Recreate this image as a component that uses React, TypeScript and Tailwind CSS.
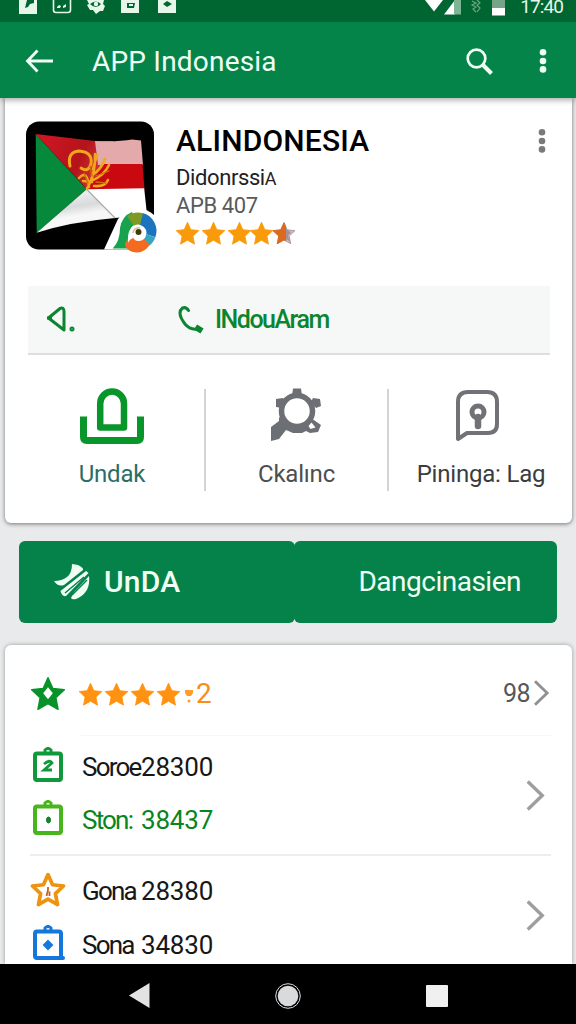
import type { ReactNode } from "react"
import clsx from "clsx"

const STAR = "M12 1.2l3.2 7.1 7.7.9-5.7 5.3 1.5 7.7L12 18.4l-6.7 3.8 1.5-7.7-5.7-5.3 7.7-.9z"

function Star({ className }: { className?: string }) {
  return (
    <svg className={className} viewBox="0 0 24 24" fill="currentColor">
      <path d={STAR} stroke="currentColor" strokeWidth=".8" strokeLinejoin="round" />
    </svg>
  )
}

function HalfStar() {
  return (
    <svg className="-ml-[2px] h-[25px] w-[24px]" viewBox="0 0 24 24">
      <defs>
        <clipPath id="half">
          <path d="M0 0h14v24H0z" />
        </clipPath>
      </defs>
      <path d={STAR} fill="#c9bdc0" stroke="#a08d91" strokeWidth=".8" />
      <path d="M13 7v10l5 3-2-6 3-3z" fill="#8b7479" opacity=".6" />
      <path d={STAR} fill="#dc6a1c" stroke="#dc6a1c" strokeWidth=".8" clipPath="url(#half)" />
    </svg>
  )
}

function MoreDots({ className }: { className?: string }) {
  return (
    <svg className={clsx("h-7 w-2", className)} viewBox="0 0 8 28" fill="currentColor">
      <circle cx="4" cy="5.3" r="3.3" />
      <circle cx="4" cy="14" r="3.3" />
      <circle cx="4" cy="22.4" r="3.3" />
    </svg>
  )
}

function Chevron({ className }: { className?: string }) {
  return (
    <svg className={className} viewBox="0 0 18 30" fill="none" stroke="currentColor" strokeWidth="3.3">
      <path d="M1.5 1.5L15.5 15l-14 13.500" />
    </svg>
  )
}

function StatusBar() {
  return (
    <div className="flex h-[22px] justify-between overflow-hidden bg-[#006631] text-[#e6f7ea]">
      <svg className="h-[22px] w-[190px]" viewBox="0 0 190 22">
        <path d="M19 0h18v14H19z" fill="currentColor" />
        <path d="M27 0h7v3l-4 1-2 3-3 1z" fill="#006631" />
        <path d="M53.500 0v10q0 2.500 2.500 2.500h12q2.500 0 2.500-2.500V0" fill="none" stroke="currentColor" strokeWidth="1.600" />
        <path d="M57 7l2-2 2 1-1 2h-3zM63 6l3-2v3l-3 1z" fill="currentColor" />
        <path d="M87 0l2 4-2 1 3 5h3l3 4 4-3h3l2-5-2-2 1-4z" fill="currentColor" />
        <path d="M90 4q6-5 11 0-5 6-11 0z" fill="#006631" />
        <circle cx="96" cy="4" r="2.200" fill="currentColor" />
        <path d="M121 0h18v13h-18z" fill="currentColor" />
        <path d="M127 3h8l-1 5h-7z" fill="#006631" />
        <path d="M129 4h4v2h-4z" fill="currentColor" />
        <path d="M158 0h18v13h-18z" fill="currentColor" />
        <path d="M163 4l4-3 5 3-5 3z" fill="#006631" />
      </svg>
      <div className="flex items-start">
        <svg className="h-[22px] w-[95px]" viewBox="0 0 95 22">
          <path d="M0 0h18L9 11.500z" fill="#fff" />
          <path d="M30 0v14.500H19z" fill="#fff" />
          <path d="M29 0h7v14.500h-7z" fill="#7db493" />
          <path d="M47 1l4 2-4 2 4 2-3 2 3 3M52 0l3 3-3 2 3 3-3 4" fill="none" stroke="#6ba584" strokeWidth="1.200" />
          <path d="M67 0h13v8H67z" fill="#74a588" />
          <path d="M67 8h13v7.500H67z" fill="#fff" />
        </svg>
        <span className="mr-[13px] text-[19px] leading-[14px] tracking-[-0.9px]">17:40</span>
      </div>
    </div>
  )
}

function AppIcon() {
  return (
    <svg className="h-[132px] w-[132px] shrink-0 overflow-visible" viewBox="0 0 132 132">
      <defs>
        <linearGradient id="fold" x1="0" y1="0" x2="1" y2=".3">
          <stop offset="0" stopColor="#d31624" />
          <stop offset=".65" stopColor="#b3141b" />
          <stop offset="1" stopColor="#d93a3b" />
        </linearGradient>
        <linearGradient id="paper" x1="0" y1="0" x2=".3" y2="1">
          <stop offset="0" stopColor="#fff" />
          <stop offset=".5" stopColor="#d8dadb" />
          <stop offset=".7" stopColor="#f7f7f7" />
        </linearGradient>
      </defs>
      <rect width="128" height="128" rx="13" y=".5" fill="#000" />
      <path d="M9.700 13L60.700 68.300 10.700 111.700z" fill="#06893a" />
      <path d="M9.700 13L69 20l18 0-8 48H60.700z" fill="url(#fold)" />
      <path d="M69 20q23 1 37-1.500l9 1L117 44H72z" fill="#e3a9ab" />
      <path d="M78 43h38.500l2 25H60.700z" fill="#c9080f" />
      <path d="M60.700 68.300l57.500-1L121 94l-32 3z" fill="#fff" />
      <path d="M60.700 68.300L89 97q-45 4-78.300 14.700z" fill="url(#paper)" />
      <path d="M60.700 68.300L89 97" stroke="#aaa" strokeWidth="1.200" />
      <g fill="none" stroke="#f3a51c" strokeLinecap="round">
        <path d="M44 45Q41 31 53 30q14 1 12 13-3 9-10 4" strokeWidth="3" />
        <path d="M61 68q9-16 8-35M53 57q8-9 10 9M65 60q13-5 18-16M66 54q9-5 13-16M68 65q11 1 14-6M67 48l4-14M57 60l9 1" strokeWidth="2.600" />
        <path d="M58 52l4 10M64 45l2 10M70 55l13-5M70 61l10 1" stroke="#c66f0c" strokeWidth="1.300" />
      </g>
      <path d="M78 128.500L92 98q8-10 20-10 10 0 16 6v34.500z" fill="#fff" />
      <path d="M86.700 127.500Q94 120 94 107q2-12 12-16l5 11q-7 3-7 10l-2 15.500z" fill="#17a34d" />
      <g fill="none" strokeWidth="12">
        <path d="M118.200 120.800A12.500 12.500 0 0 0 123.700 114.300" stroke="#35a5c4" />
        <path d="M115 97.900a12.500 12.500 0 0 1 8.700 16.400" stroke="#1b74bd" />
        <path d="M104.500 100q5-3.500 11-2" stroke="#7d9a25" />
        <path d="M119.500 119.800q-7 6-14 1.500" stroke="#f36b20" />
      </g>
      <path d="M99 124q1-8 9-7l10 2 6 4q-5 9-14 8.500-9-1-11-7.500z" fill="#f36b20" />
      <path d="M102 122q-1-17 9-18 9 0 9.500 8-1 8-8 8-4 0-5-3-4 1-5.500 5z" fill="#fff" />
      <circle cx="112.500" cy="111" r="3" fill="#3d3d12" />
      <path d="M107 112q1-6 7-5" fill="none" stroke="#d9b77d" strokeWidth="1.400" />
    </svg>
  )
}

function AppHeader() {
  return (
    <div className="flex pl-[21px] pt-[23px]">
      <AppIcon />
      <div className="ml-[18px] flex flex-1 flex-col">
        <h1 className="h-[43px] pt-[2px] text-[30px] font-medium leading-[36px] tracking-[0.2px] text-black">ALINDONESIA</h1>
        <p className="h-[27px] text-[22px] leading-[28px] tracking-[-0.4px] text-[#222]">
          Didonrssi<span className="text-[18px]">A</span>
        </p>
        <p className="h-[27px] text-[22px] leading-[29px] tracking-[-0.4px] text-[#5a5a5c]">APB 407</p>
        <div className="-ml-px mt-[3px] flex text-[#f99a0b]">
          <Star className="h-[25px] w-[25px]" />
          <Star className="ml-px h-[25px] w-[25px]" />
          <Star className="ml-px h-[25px] w-[25px]" />
          <Star className="-ml-[3px] h-[25px] w-[25px]" />
          <HalfStar />
        </div>
      </div>
      <MoreDots className="mr-[26px] mt-[6px] text-[#77797b]" />
    </div>
  )
}

function ContactStrip() {
  return (
    <div className="ml-[23px] mr-[22px] mt-[33px] flex h-[69px] items-center border-b-2 border-[#dddedf] bg-[#f6f7f7] text-[#0b852f]">
      <svg className="ml-[18px] h-8 w-8" viewBox="0 0 32 32" fill="none" stroke="currentColor" strokeWidth="3" strokeLinejoin="round">
        <path d="M2.500 14L14 4.500q4-1.500 4 3V26L2.500 14z" />
        <path d="M1 14h5" />
        <circle cx="26" cy="25" r="1" />
      </svg>
      <svg className="ml-[99px] h-8 w-8" viewBox="0 0 32 32" fill="none" stroke="currentColor" strokeLinecap="round">
        <path d="M11.500 6.500Q9 2.500 5.500 4 -.5 9 8 20q5 6 12 5" strokeWidth="3" />
        <path d="M18.500 23l6.500 4" strokeWidth="6" strokeLinecap="butt" />
      </svg>
      <span className="ml-[6px] text-[25px] font-medium leading-8 tracking-[-1.5px]">INdouAram</span>
    </div>
  )
}

function Action({ label, className, iconClassName, children }: { label: string; className?: string; iconClassName?: string; children: ReactNode }) {
  return (
    <div className={clsx("flex shrink-0 flex-col items-center", className)}>
      <svg className={clsx("-mt-[2px] h-16 w-16 shrink-0 overflow-visible", iconClassName)} viewBox="0 0 64 64">
        {children}
      </svg>
      <span className="mt-[7px] whitespace-nowrap text-[24px] leading-[32px] tracking-[-0.2px]">{label}</span>
    </div>
  )
}

function ActionRow() {
  return (
    <div className="mt-[34px] flex h-[103px] pl-[23px]">
      <Action label="Undak" className="w-[168px] text-[#2b6d66]">
        <path d="M20.200 40.500V16.500a11.900 11.900 0 0 1 23.800 0v24z" fill="none" stroke="#08952a" strokeWidth="6.500" strokeLinejoin="round" />
        <path d="M3.500 29.500V50q0 3.500 3.500 3.500h50q3.500 0 3.500-3.500V29.500" fill="none" stroke="#08952a" strokeWidth="7" />
      </Action>
      <div className="ml-[8px] h-[102px] w-[2px] shrink-0 bg-[#d3d4d5]" />
      <Action label="Ckalınc" className="w-[181px] text-[#4c4e50]">
        <g fill="#6c6f73">
          <circle cx="32" cy="24" r="15.500" fill="none" stroke="#6c6f73" strokeWidth="5.500" />
          <path d="M28 1.500h8l1 7h-10zM11 12l7-1 3 4-4 6-6-1zM46 15l2-4 7 1 1 7-5 2zM46 31l10 7-3 7-8 1-8-4z" />
          <path d="M14 30l7 5 7 5 10 0 5 3-6 3-9 0-7-3-7 9-8 2V40l8-6z" />
          <path d="M46.500 35.500l4 5-5 1.500-2-3z" fill="#fff" />
        </g>
      </Action>
      <div className="h-[102px] w-[2px] shrink-0 bg-[#d3d4d5]" />
      <Action label="Pininga: Lag" className="ml-[2px] w-[180px] text-[#3a3d40]" iconClassName="-ml-[8px]">
        <g fill="none" stroke="#707276" strokeWidth="4" strokeLinejoin="round">
          <path d="M13 52V15Q13 5 23 5h19Q52 5 52 15v22Q52 46 43 46H22z" />
          <circle cx="33" cy="25" r="6" strokeWidth="5" />
          <path d="M33 30v9" strokeWidth="6.500" strokeLinecap="round" />
        </g>
      </Action>
    </div>
  )
}

function Buttons() {
  return (
    <div className="ml-[19px] mt-[18px] flex h-[82px] w-[538px] text-[#effff4]">
      <button className="flex w-[276px] items-center rounded-[6px] bg-[#058249] pl-[35px]">
        <svg className="h-9 w-9" viewBox="0 0 36 36" fill="currentColor">
          <path d="M0 17q8 0 13-4 5-4 5-13l6 1q6 3 5 5L10 21Q4 23 0 17z" />
          <path d="M6.500 27L32 7l2.500 2L12 32q-4 1-5.500-5z" />
          <path d="M17 34l3-6L35 12q2 17-13 23-4 1-5-1z" />
          <path d="M11 29l19-16M18 31l15-15" stroke="#058249" strokeWidth="1.500" />
        </svg>
        <span className="ml-[14px] text-[30px] font-medium leading-9 tracking-[0.2px]">UnDA</span>
      </button>
      <button className="-ml-px flex w-[263px] items-center justify-end rounded-[6px] bg-[#058249] pr-[36px]">
        <span className="text-[28px] leading-9 tracking-[-0.5px]">Dangcinasien</span>
      </button>
    </div>
  )
}

function Clipboard({ className, children }: { className: string; children: ReactNode }) {
  return (
    <svg className={clsx("h-10 w-9 shrink-0", className)} viewBox="0 0 36 40" stroke="currentColor" fill="none">
      <rect x="5" y="6.500" width="26" height="26.500" rx="2" strokeWidth="4" />
      <path d="M15 6V3q3-3 6 0v3" strokeWidth="3" />
      {children}
    </svg>
  )
}

function Entry({ icon, name, value, className }: { icon: ReactNode; name: string; value: string; className?: string }) {
  return (
    <div className={clsx("flex items-center text-[26px] leading-8", className)}>
      {icon}
      <span className="ml-[16px] w-[59px] whitespace-nowrap tracking-[-1.8px]">{name}</span>
      <span className="tracking-[-0.2px]">{value}</span>
    </div>
  )
}

function StatsCard() {
  return (
    <div className="ml-[5px] mt-[22px] h-[319px] w-[567px] overflow-hidden rounded-t-[6px] bg-white pl-[25px] pr-[21px] shadow-[0_0_4px_rgba(0,0,0,0.35)]">
      <div className="flex h-[90px] items-center pt-[8px]">
        <svg className="h-9 w-9" viewBox="0 0 24 24">
          <path d={STAR} fill="#079329" stroke="#079329" strokeLinejoin="round" />
          <path d="M12 7.500l3.200 4-3.200 4-3.200-4z" fill="#fff" />
        </svg>
        <div className="ml-[12px] flex gap-px text-[#ff9210]">
          {[0, 1, 2, 3].map((i) => (
            <Star key={i} className="h-[25px] w-[25px]" />
          ))}
        </div>
        <svg className="ml-[3px] h-6 w-[10px]" viewBox="0 0 10 24" fill="#ff9d28">
          <path d="M1 8h8v3l-2 3H3l-2-3z" />
          <circle cx="5" cy="19" r="1.500" />
        </svg>
        <span className="ml-[2px] text-[28px] leading-8 text-[#f68e18]">2</span>
        <span className="ml-auto text-[25px] leading-8 tracking-[-0.6px] text-[#55585a]">98</span>
        <Chevron className="mr-px ml-[3px] h-[26px] w-[17px] -translate-y-px text-[#8f9192]" />
      </div>
      <div className="ml-auto h-px w-[470px] bg-[#f7f8f8]" />
      <div className="flex h-[120px] items-center justify-between border-b-2 border-[#edeeee]">
        <div className="mb-[3px]">
          <Entry
            name="Soroe"
            value="28300"
            className="h-[53px] text-[#171717]"
            icon={
              <Clipboard className="text-[#10983a]">
                <path d="M14 17q6-5 8-1l-8 7h8" strokeWidth="2.800" />
              </Clipboard>
            }
          />
          <Entry
            name="Ston:"
            value="38437"
            className="h-[53px] text-[#07851e]"
            icon={
              <Clipboard className="text-[#48b51c]">
                <ellipse cx="18.500" cy="20" rx="2" ry="3" fill="#16822c" stroke="#16822c" />
              </Clipboard>
            }
          />
        </div>
        <Chevron className="mr-[6px] h-[31px] w-[19px] text-[#9d9f9f]" />
      </div>
      <div className="flex h-[118px] items-center justify-between">
        <div className="mt-[6px]">
          <Entry
            name="Gona"
            value="28380"
            className="h-[54px] text-[#171717]"
            icon={
              <svg className="mb-[3px] h-9 w-9 shrink-0" viewBox="0 0 24 24">
                <path d={STAR} fill="none" stroke="#ed930f" strokeWidth="2.600" strokeLinejoin="round" transform="translate(.6 .6) scale(.95)" />
                <path d="M12 10v2l-1 4m2-3v3" fill="none" stroke="#c65f2a" strokeWidth="1.200" />
              </svg>
            }
          />
          <Entry
            name="Sona"
            value="34830"
            className="h-[54px] text-[#171717]"
            icon={
              <Clipboard className="text-[#1477dc]">
                <path d="M18 16l4 4-4 4-4-4z" fill="currentColor" strokeWidth="2" />
                <path d="M29 33h4" strokeWidth="4" strokeLinecap="round" />
              </Clipboard>
            }
          />
        </div>
        <Chevron className="mr-[6px] h-[31px] w-[19px] text-[#9d9f9f]" />
      </div>
    </div>
  )
}

function NavBar() {
  return (
    <div className="relative flex h-[60px] items-center bg-black pt-[4px]">
      <svg className="ml-[129px] h-[26px] w-[21px]" viewBox="0 0 21 26" fill="#e2e2e2">
        <path d="M0 12.500L20.500 0v25z" />
      </svg>
      <svg className="ml-[125px] h-[26px] w-[26px]" viewBox="0 0 26 26">
        <circle cx="13" cy="13" r="12.300" fill="none" stroke="#ddd" />
        <circle cx="13" cy="13" r="10.300" fill="#d9dadb" />
      </svg>
      <div className="ml-[125px] h-[22px] w-[22px] rounded-[1px] bg-[#f0f0f0]" />
    </div>
  )
}

export default function App() {
  return (
    <div className="h-[1024px] w-[576px] overflow-hidden bg-[#e9eaeb] font-['Roboto',sans-serif]">
      <div className="relative z-10 shadow-[0_2px_6px_rgba(0,0,0,0.35)]">
        <StatusBar />
        <div className="flex h-[76px] items-center bg-[#058449] pt-[2px] text-[#f0fff5]">
          <svg className="ml-[25px] h-6 w-7" viewBox="0 0 28 24" fill="none" stroke="currentColor" strokeWidth="2.800">
            <path d="M12.500 1.500L2.500 12l10 10.500M2.500 12H28" />
          </svg>
          <span className="ml-[39px] mt-[2px] text-[28px] leading-9 tracking-[0.2px]">APP Indonesia</span>
          <svg className="ml-auto h-[27px] w-[27px]" viewBox="0 0 27 27" fill="none" stroke="currentColor">
            <circle cx="10.500" cy="10.500" r="8.800" strokeWidth="2.700" />
            <path d="M16.500 16.500l9 9" strokeWidth="4" />
          </svg>
          <MoreDots className="ml-[46px] mr-[29px]" />
        </div>
      </div>
      <div className="ml-[5px] h-[425px] w-[567px] rounded-b-[6px] bg-white shadow-[0_1px_4px_rgba(0,0,0,0.5)]">
        <AppHeader />
        <ContactStrip />
        <ActionRow />
      </div>
      <Buttons />
      <StatsCard />
      <NavBar />
    </div>
  )
}
